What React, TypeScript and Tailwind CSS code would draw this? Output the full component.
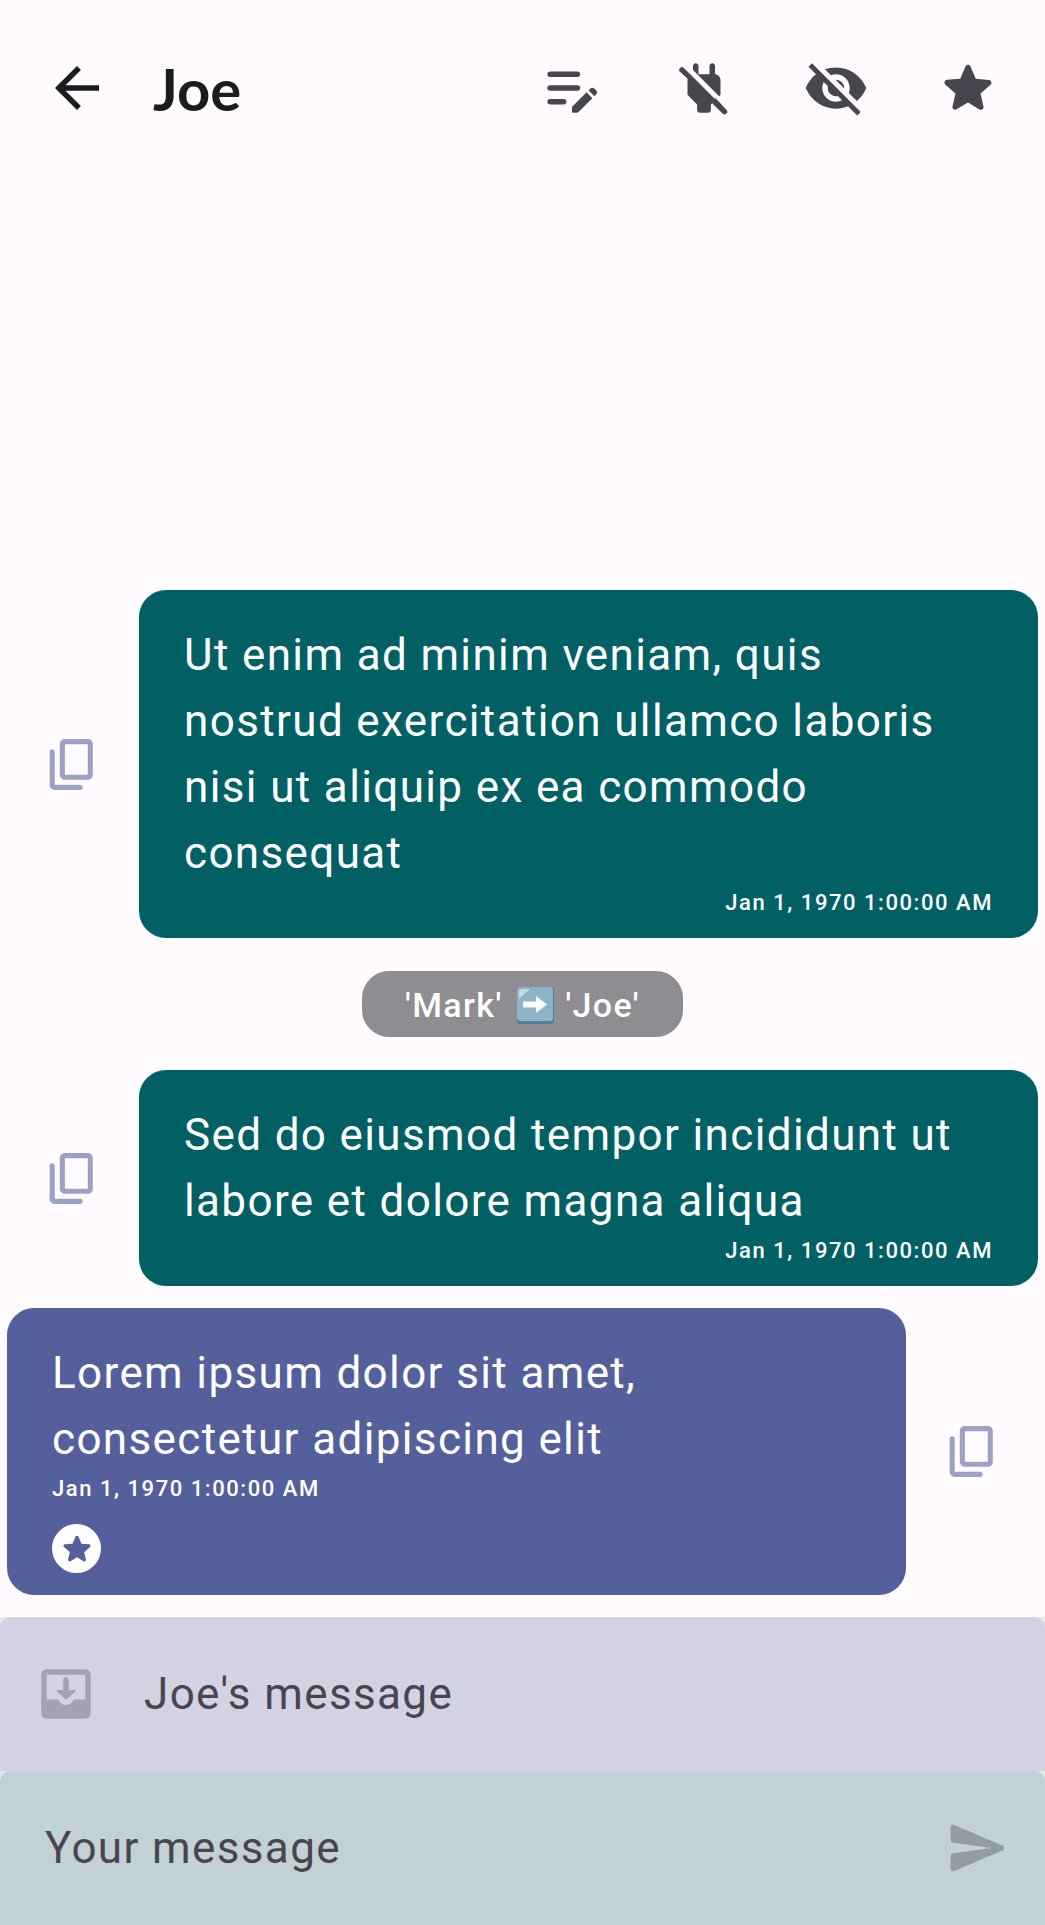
import React from 'react';

const Icon = ({ d, className }: { d: string; className: string }) => (
  <svg viewBox="0 0 24 24" fill="currentColor" fillRule="evenodd" className={className}>
    <path d={d} />
  </svg>
);

const ARROW = 'M20 11H7.83l5.59-5.59L12 4l-8 8 8 8 1.41-1.41L7.83 13H20v-2z';
const EDIT_NOTE =
  'M14 11c.55 0 1 .45 1 1s-.45 1-1 1H4c-.55 0-1-.45-1-1s.45-1 1-1h10zM3 7c0 .55.45 1 1 1h10c.55 0 1-.45 1-1s-.45-1-1-1H4c-.55 0-1 .45-1 1zm7 10c0-.55-.45-1-1-1H4c-.55 0-1 .45-1 1s.45 1 1 1h5c.55 0 1-.45 1-1zm8.01-4.13.7-.7c.39-.39 1.02-.39 1.41 0l.7.7c.39.39.39 1.02 0 1.41l-.7.7-2.11-2.11zm-.71.71-5.16 5.16c-.09.09-.14.21-.14.35v1.41c0 .28.22.5.5.5h1.41c.13 0 .26-.05.35-.15l5.16-5.16-2.12-2.11z';
const POWER_OFF =
  'M18 14.49V9c0-1-1.01-2.01-2-2V4c0-.55-.45-1-1-1s-1 .45-1 1v3h-4V4c0-.55-.45-1-1-1s-1 .45-1 1v1.48l9.51 9.5.49-.49zm-1.76 1.77L7.2 7.2l-.01.01-2.51-2.5a.996.996 0 1 0-1.41 1.41l2.8 2.49C6.04 8.74 6 8.87 6 9v5.48L9.5 18v2c0 .55.45 1 1 1h3c.55 0 1-.45 1-1v-2l.48-.48 3.76 3.77a.996.996 0 1 0 1.41-1.41l-4.31-4.62z';
const VISIBILITY_OFF =
  'M12 7c2.76 0 5 2.24 5 5 0 .65-.13 1.26-.36 1.83l2.92 2.92c1.51-1.26 2.7-2.89 3.43-4.75-1.73-4.39-6-7.5-11-7.5-1.4 0-2.74.25-3.98.7l2.16 2.16C10.74 7.13 11.35 7 12 7zM2 4.27l2.28 2.28.46.46C3.08 8.3 1.78 10.02 1 12c1.73 4.39 6 7.5 11 7.5 1.55 0 3.03-.3 4.38-.84l.42.42L19.73 22 21 20.73 3.27 3 2 4.27zM7.53 9.8l1.55 1.55c-.05.21-.08.43-.08.65 0 1.66 1.34 3 3 3 .22 0 .44-.03.65-.08l1.55 1.55c-.67.33-1.41.53-2.2.53-2.76 0-5-2.24-5-5 0-.79.2-1.53.53-2.2zm4.31-.78 3.15 3.15.02-.16c0-1.66-1.34-3-3-3l-.17.01z';
const STAR =
  'M12 17.27l4.15 2.51c.76.46 1.69-.22 1.49-1.08l-1.1-4.72 3.67-3.18c.67-.58.31-1.68-.57-1.75l-4.83-.41-1.89-4.46c-.34-.81-1.5-.81-1.84 0L9.19 8.63l-4.83.41c-.88.07-1.24 1.17-.57 1.75l3.67 3.18-1.1 4.72c-.2.86.73 1.54 1.49 1.08l4.15-2.5z';
const COPY =
  'M15 20H5V7c0-.55-.45-1-1-1s-1 .45-1 1v13c0 1.1.9 2 2 2h10c.55 0 1-.45 1-1s-.45-1-1-1zm5-4V4c0-1.1-.9-2-2-2H9c-1.1 0-2 .9-2 2v12c0 1.1.9 2 2 2h9c1.1 0 2-.9 2-2zm-2 0H9V4h9v12z';
const INBOX =
  'M19 3H5c-1.1 0-2 .9-2 2v14c0 1.1.9 2 2 2h14c1.1 0 2-.9 2-2V5c0-1.1-.9-2-2-2zM5 5h14v9h-3.6c-.5 0-.8.3-1 .7-.4.8-1.3 1.3-2.4 1.3s-2-.5-2.4-1.3c-.2-.4-.5-.7-1-.7H5zM11 6.8c0-.5.5-.9 1-.9s1 .4 1 .9v3.7h2.2c.3 0 .4.3.2.5l-3.1 2.9c-.2.2-.4.2-.6 0L8.6 11c-.2-.2-.1-.5.2-.5H11z';
const SEND =
  'M3.4 20.4l17.45-7.48c.81-.35.81-1.49 0-1.84L3.4 3.6c-.66-.29-1.39.2-1.39.91L2 9.12c0 .5.37.93.87.99L17 12 2.87 13.88c-.5.07-.87.5-.87 1l.01 4.61c0 .71.73 1.2 1.39.91z';

const Timestamp = ({ className = '' }: { className?: string }) => (
  <div className={`h-[35px] text-[22px] leading-[34px] tracking-[1.55px] font-medium text-white ${className}`}>
    Jan 1, 1970 1:00:00 AM
  </div>
);

const CopyIcon = () => <Icon d={COPY} className="w-[61px] h-[61px] shrink-0 text-[#9da1c6]" />;

const SentRow = ({ lines, className }: { lines: string[]; className: string }) => (
  <div className={`flex items-center justify-end pr-[7px] ${className}`}>
    <CopyIcon />
    <div className="ml-[36px] w-[899px] rounded-[27px] bg-[#006064] pt-[32px] pb-[17px] px-[45px]">
      <div className="text-[44px] leading-[66px] tracking-[1.37px] text-white">
        {lines.map((l) => (
          <div key={l}>{l}</div>
        ))}
      </div>
      <Timestamp className="text-right" />
    </div>
  </div>
);

export default function App() {
  return (
    <div className="flex h-[1925px] w-[1045px] flex-col overflow-hidden bg-[#fffbfe] font-['Roboto',sans-serif]">
      {/* Top bar */}
      <div className="flex h-[176px] shrink-0 items-center pl-[44px] pr-[44px]">
        <Icon d={ARROW} className="w-[66px] h-[66px] text-[#1c1b1f]" />
        <div className="ml-[43px] mt-[2px] flex-1 font-['Lato',sans-serif] text-[58px] font-bold leading-none text-[#1c1b1f]">
          Joe
        </div>
        <div className="flex text-[#49454f]">
          <div className="flex w-[132px] justify-center">
            <Icon d={EDIT_NOTE} className="w-[66px] h-[66px]" />
          </div>
          <div className="flex w-[132px] justify-center">
            <Icon d={POWER_OFF} className="w-[66px] h-[66px]" />
          </div>
          <div className="flex w-[132px] justify-center">
            <Icon d={VISIBILITY_OFF} className="w-[66px] h-[66px]" />
          </div>
          <div className="flex w-[99px] justify-end">
            <Icon d={STAR} className="w-[66px] h-[66px]" />
          </div>
        </div>
      </div>

      <div className="flex-1" />

      {/* Messages */}
      <SentRow
        className=""
        lines={['Ut enim ad minim veniam, quis', 'nostrud exercitation ullamco laboris', 'nisi ut aliquip ex ea commodo', 'consequat']}
      />

      <div className="mt-[33px] flex justify-center">
        <div className="flex h-[66px] w-[321px] items-center justify-center rounded-[27px] bg-[#8f8c92] pt-[2px] text-[34px] font-medium tracking-[1.37px] text-white">
          <span>'Mark'</span>
          <svg viewBox="0 0 37 37" className="ml-[14px] mr-[12px] h-[37px] w-[37px]">
            <rect x="0" y="0" width="37" height="37" rx="3" fill="#4f7f92" />
            <rect x="0" y="0" width="36" height="34" rx="3" fill="#8cb3c6" />
            <path d="M2 12V5a3 3 0 0 1 3-3h8z" fill="#c3dbe4" />
            <path d="M6 14.5h13V9l11 8.5L19 26v-5.5H6z" fill="#fafafa" />
          </svg>
          <span>'Joe'</span>
        </div>
      </div>

      <SentRow className="mt-[33px]" lines={['Sed do eiusmod tempor incididunt ut', 'labore et dolore magna aliqua']} />

      <div className="mt-[22px] flex items-center pl-[7px]">
        <div className="w-[899px] rounded-[27px] bg-[#54609b] pt-[32px] pb-[22px] px-[45px]">
          <div className="text-[44px] leading-[66px] tracking-[1.37px] text-white">
            <div>Lorem ipsum dolor sit amet,</div>
            <div>consectetur adipiscing elit</div>
          </div>
          <Timestamp />
          <div className="mt-[17px] flex h-[49px] w-[49px] items-center justify-center rounded-full bg-white text-[#54609b]">
            <Icon d={STAR} className="h-[38px] w-[38px]" />
          </div>
        </div>
        <div className="ml-[36px]">
          <CopyIcon />
        </div>
      </div>

      {/* Bottom bars */}
      <div className="mt-[22px] bg-[#e9e8f1]">
        <div className="flex h-[154px] items-center rounded-t-[11px] bg-[#d3d2e2] pl-[33px]">
          <Icon d={INBOX} className="w-[66px] h-[66px] text-[#a3a2b0]" />
          <div className="ml-[45px] text-[44px] tracking-[1.37px] text-[#49454f]">Joe's message</div>
        </div>
      </div>
      <div className="bg-[#dbe6e8]">
        <div className="flex h-[154px] items-center justify-between rounded-t-[11px] bg-[#c2d1d5] pl-[45px] pr-[34px]">
          <div className="text-[44px] tracking-[1.37px] text-[#49454f]">Your message</div>
          <Icon d={SEND} className="w-[66px] h-[66px] text-[#939ca3]" />
        </div>
      </div>
    </div>
  );
}
